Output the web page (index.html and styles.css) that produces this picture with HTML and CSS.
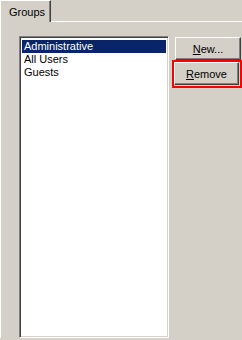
FILE: index.html
```html
<!DOCTYPE html>
<html>
<head>
<meta charset="utf-8">
<link rel="stylesheet" href="styles.css">
</head>
<body>
<div class="tabs">
  <div class="tab">Groups</div>
  <div class="tab-rest"></div>
</div>
<div class="panel">
  <div class="list">
    <div class="item selected">Administrative</div>
    <div class="item">All Users</div>
    <div class="item">Guests</div>
  </div>
  <div class="buttons">
    <button class="btn"><u>N</u>ew...</button>
    <div class="highlight"><button class="btn"><u>R</u>emove</button></div>
  </div>
</div>
</body>
</html>
```

FILE: styles.css
```css
html, body {
  margin: 0;
  padding: 0;
  background: #d4d0c8;
  font-family: "Liberation Sans", Arial, sans-serif;
  font-size: 11px;
  color: #000;
  width: 242px;
  height: 340px;
  overflow: hidden;
}
.tabs {
  display: flex;
  height: 22px;
}
.tab {
  box-sizing: border-box;
  width: 51px;
  height: 22px;
  border-left: 1px solid #fff;
  border-top: 1px solid #fff;
  border-right: 1px solid #404040;
  box-shadow: inset -1px 0 0 #808080;
  padding: 5px 0 0 8px;
  line-height: 13px;
}
.tab-rest {
  flex: 1;
  border-bottom: 1px solid #fff;
  height: 21px;
}
.panel {
  display: flex;
  align-items: flex-start;
  padding: 14px 0 0 18px;
  border-left: 1px solid #fff;
}
.list {
  box-sizing: border-box;
  flex: none;
  width: 150px;
  height: 302px;
  background: #fff;
  border-top: 1px solid #808080;
  border-left: 1px solid #808080;
  border-right: 1px solid #fff;
  border-bottom: 1px solid #fff;
  box-shadow: inset 1px 1px 0 #404040, inset -1px -1px 0 #d4d0c8;
  padding: 3px 2px 2px 2px;
}
.item {
  height: 13px;
  line-height: 13px;
  padding-left: 2px;
}
.item.selected {
  background: #0a246a;
  color: #fff;
}
.buttons {
  display: flex;
  flex: none;
  flex-direction: column;
  align-items: flex-start;
  margin-left: 3px;
  margin-top: 1px;
}
.btn {
  box-sizing: border-box;
  width: 66px;
  height: 23px;
  margin: 0 0 0 3px;
  font-family: "Liberation Sans", Arial, sans-serif;
  font-size: 11px;
  color: #000;
  background: #d4d0c8;
  border-top: 1px solid #fff;
  border-left: 1px solid #fff;
  border-right: 1px solid #404040;
  border-bottom: 1px solid #404040;
  box-shadow: inset -1px -1px 0 #808080;
  padding: 0;
}
.highlight {
  border: 2px solid #ff0000;
  padding: 0 1px 1px 0;
}
.highlight .btn {
  margin: 0;
  width: 65px;
}
```
